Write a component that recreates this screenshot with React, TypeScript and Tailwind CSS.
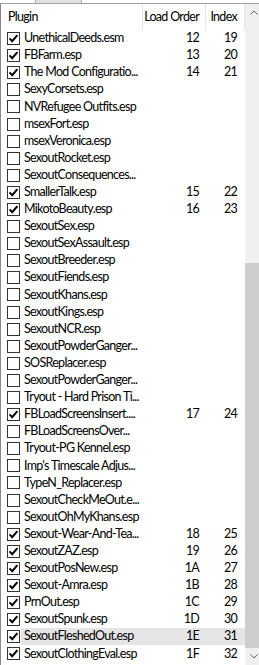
import React from 'react';

type Plugin = { name: string; checked: boolean; order?: string; index?: string; selected?: boolean };

const plugins: Plugin[] = [
  { name: 'UnethicalDeeds.esm', checked: true, order: '12', index: '19' },
  { name: 'FBFarm.esp', checked: true, order: '13', index: '20' },
  { name: 'The Mod Configuratio...', checked: true, order: '14', index: '21' },
  { name: 'SexyCorsets.esp', checked: false },
  { name: 'NVRefugee Outfits.esp', checked: false },
  { name: 'msexFort.esp', checked: false },
  { name: 'msexVeronica.esp', checked: false },
  { name: 'SexoutRocket.esp', checked: false },
  { name: 'SexoutConsequences...', checked: false },
  { name: 'SmallerTalk.esp', checked: true, order: '15', index: '22' },
  { name: 'MikotoBeauty.esp', checked: true, order: '16', index: '23' },
  { name: 'SexoutSex.esp', checked: false },
  { name: 'SexoutSexAssault.esp', checked: false },
  { name: 'SexoutBreeder.esp', checked: false },
  { name: 'SexoutFiends.esp', checked: false },
  { name: 'SexoutKhans.esp', checked: false },
  { name: 'SexoutKings.esp', checked: false },
  { name: 'SexoutNCR.esp', checked: false },
  { name: 'SexoutPowderGanger...', checked: false },
  { name: 'SOSReplacer.esp', checked: false },
  { name: 'SexoutPowderGanger...', checked: false },
  { name: 'Tryout - Hard Prison Ti...', checked: false },
  { name: 'FBLoadScreensInsert....', checked: true, order: '17', index: '24' },
  { name: 'FBLoadScreensOver...', checked: false },
  { name: 'Tryout-PG Kennel.esp', checked: false },
  { name: "Imp's Timescale Adjus...", checked: false },
  { name: 'TypeN_Replacer.esp', checked: false },
  { name: 'SexoutCheckMeOut.e...', checked: false },
  { name: 'SexoutOhMyKhans.esp', checked: false },
  { name: 'Sexout-Wear-And-Tea...', checked: true, order: '18', index: '25' },
  { name: 'SexoutZAZ.esp', checked: true, order: '19', index: '26' },
  { name: 'SexoutPosNew.esp', checked: true, order: '1A', index: '27' },
  { name: 'Sexout-Amra.esp', checked: true, order: '1B', index: '28' },
  { name: 'PrnOut.esp', checked: true, order: '1C', index: '29' },
  { name: 'SexoutSpunk.esp', checked: true, order: '1D', index: '30' },
  { name: 'SexoutFleshedOut.esp', checked: true, order: '1E', index: '31', selected: true },
  { name: 'SexoutClothingEval.esp', checked: true, order: '1F', index: '32' },
];

function CheckBox({ checked }: { checked: boolean }) {
  return (
    <div className="flex h-[13px] w-[13px] items-center justify-center border border-[#333333] bg-white">
      {checked && (
        <svg width="11" height="11" viewBox="0 0 11 11">
          <path d="M1.6 5.4 L4.2 8.2 L9.4 2.1" fill="none" stroke="#000" strokeWidth="2" />
        </svg>
      )}
    </div>
  );
}

export default function App() {
  return (
    <div className="h-[665px] w-[259px] overflow-hidden bg-white font-['Lato',sans-serif] text-[12.5px] tracking-[-0.7px] text-black">
      {/* strip of the control above */}
      <div className="flex h-[4px] border-b border-[#a0a0a0]">
        <div className="w-[35px]" />
        <div className="w-[47px] border-x border-[#adadad] bg-[#e1e1e1]" />
      </div>

      <div className="flex h-[661px] border-l border-[#828790]">
        {/* list */}
        <div className="flex w-[244px] flex-col">
          {/* header */}
          <div className="flex h-[26px] items-center whitespace-nowrap">
            <div className="flex h-full w-[142px] items-center border-r border-[#e5e5e5] pl-[7px]">Plugin</div>
            <div className="flex h-full w-[63px] items-center justify-end border-r border-[#e5e5e5] pr-[6px]">Load Order</div>
            <div className="flex h-full w-[39px] items-center justify-end border-r border-[#e5e5e5] pr-[7px]">Index</div>
          </div>

          {/* rows */}
          {plugins.map((p, i) => (
            <div key={i} className="flex h-[17.1px] items-center">
              <div className="flex w-[20px] shrink-0 items-center pl-[6px]">
                <CheckBox checked={p.checked} />
              </div>
              <div className={`flex h-full flex-1 items-center ${p.selected ? 'bg-[#e5e5e5]' : ''}`}>
                <div className="w-[122px] overflow-hidden whitespace-nowrap pl-[3px]">{p.name}</div>
                <div className="w-[63px] pr-[7px] text-right">{p.order}</div>
                <div className="w-[39px] pr-[8px] text-right">{p.index}</div>
              </div>
            </div>
          ))}
        </div>

        {/* scrollbar */}
        <div className="flex w-[14px] flex-col bg-[#f0f0f0]">
          <div className="flex h-[17px] items-center justify-center pl-[3px]">
            <svg width="8" height="5" viewBox="0 0 8 5">
              <path d="M0.5 4.5 L4 1 L7.5 4.5" fill="none" stroke="#606060" strokeWidth="1" />
            </svg>
          </div>
          <div className="h-[242px]" />
          <div className="flex-1 bg-[#cdcdcd]" />
          <div className="flex h-[17px] items-center justify-center pl-[3px]">
            <svg width="8" height="5" viewBox="0 0 8 5">
              <path d="M0.5 0.5 L4 4 L7.5 0.5" fill="none" stroke="#606060" strokeWidth="1" />
            </svg>
          </div>
        </div>
      </div>
    </div>
  );
}
